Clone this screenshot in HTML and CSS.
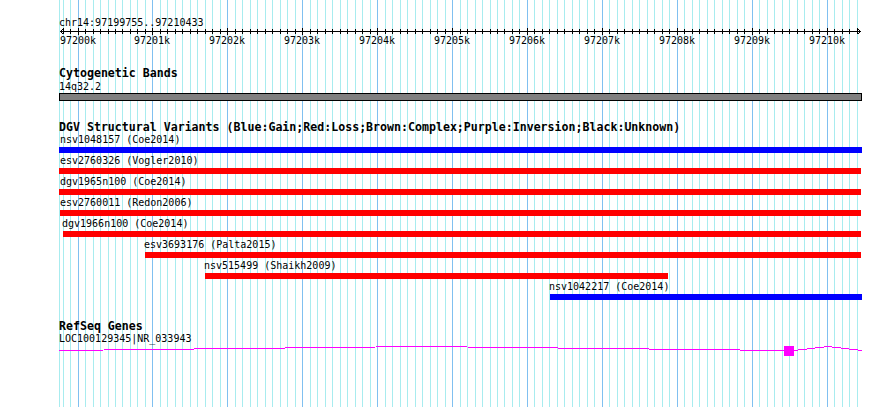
FILE: index.html
```html
<!DOCTYPE html>
<html lang="en">
<head>
  <meta charset="UTF-8" />
  <title>chr14:97199755..97210433</title>
  <link rel="stylesheet" href="styles.css">
</head>
<body>

  <div class="browser">
    <div class="grid" id="grid"></div>

    <div class="track ruler">
      <div class="ruler-title">chr14:97199755..97210433</div>
      <div class="axis" id="axis"></div>
    </div>

    <div class="track cyto">
      <div class="track-title">Cytogenetic Bands</div>
      <div class="band-label">14q32.2</div>
      <div class="band"></div>
    </div>

    <div class="track dgv">
      <div class="track-title">DGV Structural Variants (Blue:Gain;Red:Loss;Brown:Complex;Purple:Inversion;Black:Unknown)</div>

      <div class="sv-row">
        <div class="sv-label" style="margin-left:60px">nsv1048157 (Coe2014)</div>
        <div class="sv-bar gain" style="margin-left:59px;width:803px"></div>
      </div>
      <div class="sv-row">
        <div class="sv-label" style="margin-left:60px">esv2760326 (Vogler2010)</div>
        <div class="sv-bar loss" style="margin-left:59px;width:802px"></div>
      </div>
      <div class="sv-row">
        <div class="sv-label" style="margin-left:60px">dgv1965n100 (Coe2014)</div>
        <div class="sv-bar loss" style="margin-left:59px;width:802px"></div>
      </div>
      <div class="sv-row">
        <div class="sv-label" style="margin-left:60px">esv2760011 (Redon2006)</div>
        <div class="sv-bar loss" style="margin-left:60px;width:801px"></div>
      </div>
      <div class="sv-row">
        <div class="sv-label" style="margin-left:62px">dgv1966n100 (Coe2014)</div>
        <div class="sv-bar loss" style="margin-left:63px;width:798px"></div>
      </div>
      <div class="sv-row">
        <div class="sv-label" style="margin-left:144px">esv3693176 (Palta2015)</div>
        <div class="sv-bar loss" style="margin-left:145px;width:716px"></div>
      </div>
      <div class="sv-row">
        <div class="sv-label" style="margin-left:204px">nsv515499 (Shaikh2009)</div>
        <div class="sv-bar loss" style="margin-left:205px;width:463px"></div>
      </div>
      <div class="sv-row">
        <div class="sv-label" style="margin-left:549px">nsv1042217 (Coe2014)</div>
        <div class="sv-bar gain" style="margin-left:550px;width:312px"></div>
      </div>
    </div>

    <div class="track refseq">
      <div class="track-title">RefSeq Genes</div>
      <div class="gene-label">LOC100129345|NR_033943</div>
      <svg class="gene" width="890" height="11" shape-rendering="crispEdges">
        <polyline points="59,4.5 421,0.5 784,4.5" />
        <rect x="784" y="0" width="10" height="10" />
        <polyline points="794,4.5 828,0.5 862,4.5" />
      </svg>
    </div>
  </div>

  <script>
    // visible region and pixel scale
    var START = 97199755;
    var END = 97210433;
    var LEFT = 59.7;
    var SCALE = 0.0749;

    function toPx(bp) {
      return Math.floor(LEFT + (bp - START) * SCALE);
    }

    // background grid, one line per 100 bp
    var grid = document.getElementById("grid");
    var edge = document.createElement("div");
    edge.className = "grid-line";
    edge.style.left = "59px";
    grid.appendChild(edge);

    var firstTick = Math.ceil(START / 100) * 100;
    for (var bp = firstTick; bp <= END; bp += 100) {
      var line = document.createElement("div");
      line.className = bp % 1000 === 0 ? "grid-line major" : "grid-line";
      line.style.left = toPx(bp) + "px";
      grid.appendChild(line);
    }

    // ruler: axis line, ticks, arrows and kb labels
    var axis = document.getElementById("axis");
    var ns = "http://www.w3.org/2000/svg";
    var svg = document.createElementNS(ns, "svg");
    svg.setAttribute("width", "890");
    svg.setAttribute("height", "12");
    svg.setAttribute("shape-rendering", "crispEdges");

    function addLine(x1, y1, x2, y2) {
      var l = document.createElementNS(ns, "line");
      l.setAttribute("x1", x1);
      l.setAttribute("y1", y1);
      l.setAttribute("x2", x2);
      l.setAttribute("y2", y2);
      svg.appendChild(l);
    }

    addLine(60, 5.5, 861, 5.5);
    addLine(60.5, 5.5, 63.5, 2.5);
    addLine(60.5, 5.5, 63.5, 8.5);
    addLine(860.5, 5.5, 857.5, 2.5);
    addLine(860.5, 5.5, 857.5, 8.5);

    for (var t = firstTick; t <= END; t += 100) {
      var x = toPx(t) + 0.5;
      if (t % 1000 === 0) {
        addLine(x, 2, x, 9);

        var label = document.createElement("div");
        label.className = "axis-label";
        label.textContent = (t / 1000) + "k";
        label.style.left = (toPx(t) - 18) + "px";
        axis.appendChild(label);
      } else {
        addLine(x, 3, x, 8);
      }
    }
    axis.appendChild(svg);
  </script>

</body>
</html>
```

FILE: styles.css
```css
body {
  margin: 0;
  background-color: #ffffff;
  color: #000000;
  font-family: "DejaVu Sans Mono", "Liberation Mono", monospace;
  font-size: 10px;
}
.browser {
  position: relative;
  width: 890px;
  height: 407px;
  overflow: hidden;
}
.grid {
  position: absolute;
  top: 0;
  left: 0;
  right: 0;
  bottom: 0;
}
.grid-line {
  position: absolute;
  top: 0;
  bottom: 0;
  width: 1px;
  background-color: #a8ecef;
}
.grid-line.major {
  background-color: #80c0f0;
}
.track {
  position: relative;
}
.track-title {
  margin-left: 59px;
  font-size: 11.6px;
  font-weight: bold;
  line-height: 13px;
  white-space: nowrap;
}

/* ruler */
.ruler {
  padding-top: 16px;
}
.ruler-title {
  margin-left: 59px;
  line-height: 13px;
}
.axis {
  position: relative;
  height: 22px;
  margin-top: -3px;
}
.axis svg {
  position: absolute;
  top: 0;
  left: 0;
}
.axis line {
  stroke: #000000;
  stroke-width: 1;
}
.axis-label {
  position: absolute;
  top: 8px;
  line-height: 13px;
}

/* cytogenetic bands */
.cyto {
  margin-top: 19px;
}
.band-label {
  margin-left: 59px;
  line-height: 13px;
}
.band {
  box-sizing: border-box;
  margin-left: 59px;
  width: 803px;
  height: 8px;
  background-color: #808080;
  border: 1px solid #000000;
}

/* structural variants */
.dgv {
  margin-top: 20px;
}
.dgv .track-title {
  line-height: 12px;
}
.sv-row {
  margin-bottom: 1px;
}
.sv-label {
  line-height: 14px;
  white-space: nowrap;
}
.sv-bar {
  height: 6px;
}
.sv-bar.gain {
  background-color: #0000ff;
}
.sv-bar.loss {
  background-color: #ff0000;
}

/* refseq genes */
.refseq {
  margin-top: 21px;
}
.refseq .track-title {
  line-height: 11px;
}
.gene-label {
  margin-left: 59px;
  line-height: 14px;
}
.gene {
  display: block;
}
.gene polyline {
  fill: none;
  stroke: #ff00ff;
  stroke-width: 1;
}
.gene rect {
  fill: #ff00ff;
}
```
